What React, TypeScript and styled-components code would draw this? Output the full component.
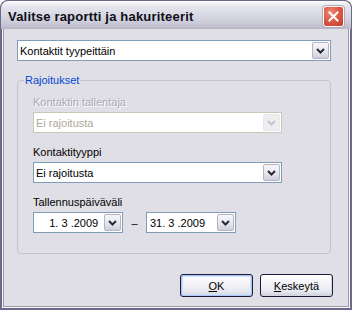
import React from 'react'
import styled, { createGlobalStyle } from 'styled-components'

const Global = createGlobalStyle`
    html, body {
        margin: 0;
        background: #ffffff;
    }
    body {
        font-family: Tahoma, "Liberation Sans", Arial, sans-serif;
        font-size: 11px;
        color: #000;
    }
`

const Chevron: React.FC<{ disabled?: boolean }> = ({ disabled }) => (
    <svg width="9" height="6" viewBox="0 0 9 6">
        <polyline
            points="1,1 4.5,4.5 8,1"
            fill="none"
            stroke={disabled ? '#c4c3cc' : '#2a2a3a'}
            strokeWidth="2"
        />
    </svg>
)

const Combo: React.FC<{ value: string; width: number; disabled?: boolean }> = ({ value, width, disabled }) => (
    <ComboBox $width={width} $disabled={disabled}>
        <ComboText $disabled={disabled}>{value}</ComboText>
        <DropButton $disabled={disabled}>
            <Chevron disabled={disabled} />
        </DropButton>
    </ComboBox>
)

const DateBox: React.FC<{ value: string }> = ({ value }) => (
    <DateField>
        <DateText>{value}</DateText>
        <DropButton>
            <Chevron />
        </DropButton>
    </DateField>
)

const App: React.FC = () => {
    return (
        <>
            <Global />
            <Window>
                <TitleBar>
                    <Title>Valitse raportti ja hakuriteerit</Title>
                    <CloseButton>
                        <svg width="11" height="11" viewBox="0 0 11 11">
                            <path d="M1.5 1.5 L9.5 9.5 M9.5 1.5 L1.5 9.5" stroke="#fff" strokeWidth="2" strokeLinecap="square" />
                        </svg>
                    </CloseButton>
                </TitleBar>
                <Frame>
                    <Client>
                        <Combo value="Kontaktit tyypeittäin" width={314} />
                        <Group>
                            <Legend>Rajoitukset</Legend>
                            <GroupBody>
                                <Field>
                                    <Label $disabled>Kontaktin tallentaja</Label>
                                    <Combo value="Ei rajoitusta" width={249} disabled />
                                </Field>
                                <Field>
                                    <Label>Kontaktityyppi</Label>
                                    <Combo value="Ei rajoitusta" width={249} />
                                </Field>
                                <Field>
                                    <Label>Tallennuspäiväväli</Label>
                                    <DateRow>
                                        <DateBox value={'\u2007\u20071. 3 .2009'} />
                                        <Dash>–</Dash>
                                        <DateBox value={'31. 3 .2009'} />
                                    </DateRow>
                                </Field>
                            </GroupBody>
                        </Group>
                        <ButtonRow>
                            <Button $default><u>O</u>K</Button>
                            <Button><u>K</u>eskeytä</Button>
                        </ButtonRow>
                    </Client>
                </Frame>
            </Window>
        </>
    )
}

const Window = styled.div`
    width: 352px;
    height: 310px;
    display: flex;
    flex-direction: column;
    background: #6b6a88;
    border-radius: 8px 8px 0 0;
    overflow: hidden;
    box-sizing: border-box;
`

const TitleBar = styled.div`
    height: 29px;
    flex: none;
    display: flex;
    align-items: center;
    justify-content: space-between;
    padding: 0 7px 0 7px;
    box-sizing: border-box;
    border-radius: 8px 8px 0 0;
    border: 1px solid #6b6a88;
    border-bottom: none;
    background: linear-gradient(
        to bottom,
        #ffffff 0px,
        #f2f2f6 2px,
        #e4e4ec 6px,
        #dcdce6 12px,
        #cfcfdc 20px,
        #bcbccd 27px,
        #a9a9bf 29px
    );
`

const Title = styled.span`
    font-family: "Trebuchet MS", "Liberation Sans", Arial, sans-serif;
    font-weight: bold;
    font-size: 13px;
    color: #0e0e18;
    margin-top: 2px;
    letter-spacing: 0.2px;
`

const CloseButton = styled.div`
    width: 21px;
    height: 21px;
    box-sizing: border-box;
    margin-top: 2px;
    border: 1px solid #ffffff;
    border-radius: 3px;
    display: flex;
    align-items: center;
    justify-content: center;
    background: radial-gradient(circle at 35% 30%, #ee8a78 0%, #dc5a48 45%, #c43a2c 100%);
    box-shadow: 0 0 0 1px #b9a8b0;
`

const Frame = styled.div`
    flex: 1;
    display: flex;
    padding: 0 2px 2px 2px;
`

const Client = styled.div`
    flex: 1;
    display: flex;
    flex-direction: column;
    background: #e0dfe5;
    border: 1px solid #f6f6fa;
    border-top: none;
    box-shadow: inset 1px 0 0 #9c9cb0, inset -1px 0 0 #9c9cb0, inset 0 -1px 0 #9c9cb0;
    padding: 11px 16px 0 14px;
`

const ComboBox = styled.div<{ $width: number; $disabled?: boolean }>`
    width: ${p => p.$width}px;
    height: 21px;
    box-sizing: border-box;
    display: flex;
    align-items: stretch;
    background: #ffffff;
    border: 1px solid ${p => (p.$disabled ? '#c9c7ba' : '#7f9db9')};
    padding: 1px;
`

const ComboText = styled.div<{ $disabled?: boolean }>`
    flex: 1;
    display: flex;
    align-items: center;
    padding-left: 1px;
    color: ${p => (p.$disabled ? '#aca899' : '#000')};
`

const DropButton = styled.div<{ $disabled?: boolean }>`
    width: 17px;
    box-sizing: border-box;
    display: flex;
    align-items: center;
    justify-content: center;
    border: 1px solid ${p => (p.$disabled ? '#e8e8ea' : '#b4b4c6')};
    border-radius: 2px;
    background: ${p =>
        p.$disabled
            ? '#eeeef0'
            : 'linear-gradient(to bottom, #f7f7fa 0%, #e4e4ec 60%, #cfcfdc 100%)'};
`

const Group = styled.fieldset`
    margin: 13px 0 0 0;
    padding: 0;
    border: 1px solid #c3c2cc;
    border-radius: 4px;
    width: 314px;
    box-sizing: border-box;
`

const Legend = styled.legend`
    margin-left: 6px;
    padding: 0 1px;
    color: #0046d5;
    line-height: 13px;
`

const GroupBody = styled.div`
    display: flex;
    flex-direction: column;
    gap: 12px;
    padding: 8px 0 20px 15px;
`

const Field = styled.div`
    display: flex;
    flex-direction: column;
    gap: 3px;
`

const Label = styled.div<{ $disabled?: boolean }>`
    line-height: 14px;
    color: ${p => (p.$disabled ? '#a9a8b4' : '#000')};
    ${p => (p.$disabled ? 'text-shadow: 1px 1px 0 #ffffff;' : '')}
`

const DateRow = styled.div`
    display: flex;
    align-items: center;
`

const DateField = styled.div`
    width: 90px;
    height: 21px;
    box-sizing: border-box;
    display: flex;
    align-items: stretch;
    background: #ffffff;
    border: 1px solid #7f9db9;
    padding: 1px;
`

const DateText = styled.div`
    flex: 1;
    display: flex;
    align-items: center;
    padding-left: 2px;
    white-space: pre;
`

const Dash = styled.span`
    width: 23px;
    text-align: center;
`

const ButtonRow = styled.div`
    display: flex;
    justify-content: flex-end;
    gap: 7px;
    margin-top: 20px;
`

const Button = styled.div<{ $default?: boolean }>`
    width: 73px;
    height: 23px;
    box-sizing: border-box;
    display: flex;
    align-items: center;
    justify-content: center;
    border: 1px solid #1c1c3c;
    border-radius: 3px;
    background: linear-gradient(to bottom, #ffffff 0%, #f4f4f8 40%, #e6e6ee 80%, #cdcdda 100%);
    box-shadow: ${p =>
        p.$default
            ? 'inset 0 0 0 1px #aac6f2, inset 0 0 0 2px #cfe0fa'
            : 'inset -1px -1px 0 #d4d4e0'};
    & u {
        text-decoration: underline;
    }
`

export default App
